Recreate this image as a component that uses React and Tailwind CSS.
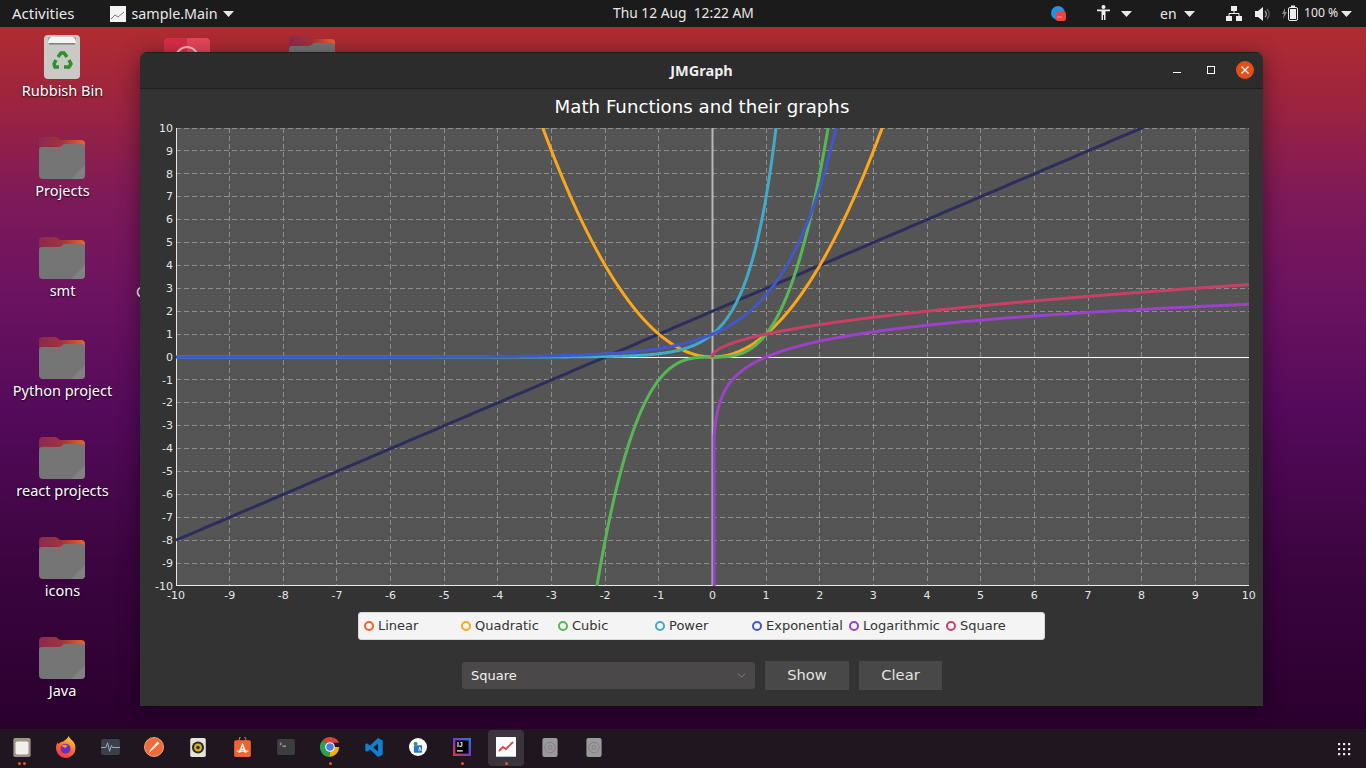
import React from 'react';
import { ChevronDown } from 'lucide-react';

const PLOT_W = 1073;
const PLOT_H = 458;
const toX = (x) => ((x + 10) / 20) * PLOT_W;
const toY = (y) => ((10 - y) / 20) * PLOT_H;

function curve(fn, from = -10, to = 10, steps = 900) {
  const pts = [];
  for (let i = 0; i <= steps; i++) {
    const x = from + ((to - from) * i) / steps;
    const y = Math.max(-30, Math.min(30, fn(x)));
    pts.push(`${toX(x).toFixed(2)},${toY(y).toFixed(2)}`);
  }
  return 'M' + pts.join('L');
}

// ln and sqrt shoot up fast near zero, so they get sampled on a cubed scale
function curveFromZero(fn, start) {
  const pts = [];
  for (let i = 0; i <= 900; i++) {
    const x = start + (10 - start) * Math.pow(i / 900, 3);
    pts.push(`${toX(x).toFixed(2)},${toY(fn(x)).toFixed(2)}`);
  }
  return 'M' + pts.join('L');
}

const series = [
  { d: curve((x) => x + 2), color: '#2d2d5c' },
  { d: curve((x) => x * x), color: '#fba71b' },
  { d: curve((x) => x * x * x), color: '#57b757' },
  { d: curve((x) => Math.pow(7, x)), color: '#41a9c9' },
  { d: curve((x) => Math.exp(x)), color: '#4258c9' },
  // the log line drops straight down from its first sample
  { d: `M${toX(0.03).toFixed(2)},${PLOT_H}L` + curveFromZero((x) => Math.log(x), 0.03).slice(1), color: '#9a42c8' },
  { d: curveFromZero((x) => Math.sqrt(x), 0), color: '#c84164' },
];

const legend = [
  ['Linear', 'border-[#f3622d]'],
  ['Quadratic', 'border-[#fba71b]'],
  ['Cubic', 'border-[#57b757]'],
  ['Power', 'border-[#41a9c9]'],
  ['Exponential', 'border-[#4258c9]'],
  ['Logarithmic', 'border-[#9a42c8]'],
  ['Square', 'border-[#c84164]'],
];

const units = Array.from({ length: 21 }, (_, i) => i - 10);

function Caret({ className = '' }) {
  return (
    <svg width="11" height="6" viewBox="0 0 11 6" className={className}>
      <path d="M0 0h11L5.5 6z" fill="#e8e8e8" />
    </svg>
  );
}

function Folder() {
  return (
    <svg width="46" height="42" viewBox="0 0 46 42" className="block">
      <defs>
        <linearGradient id="tab" x1="0" x2="1" y1="0" y2="0">
          <stop offset="0" stopColor="#8a2a52" />
          <stop offset="0.5" stopColor="#a0343a" />
          <stop offset="1" stopColor="#ec6528" />
        </linearGradient>
      </defs>
      <path d="M0 4a4 4 0 0 1 4-4h12c3 0 3 3 6 3h20a4 4 0 0 1 4 4v14H0z" fill="url(#tab)" />
      <path d="M0 13a3 3 0 0 1 3-3h17c3 0 3-3 6-3h17a3 3 0 0 1 3 3v28a4 4 0 0 1-4 4H4a4 4 0 0 1-4-4z" fill="#757575" />
      <path d="M46 28v10a4 4 0 0 1-4 4H32z" fill="#818181" />
    </svg>
  );
}

function Bin() {
  return (
    <svg width="36" height="44" viewBox="0 0 36 44" className="block">
      <rect x="0" y="0" width="36" height="44" rx="4" fill="#c9c9c5" />
      <rect x="4" y="2" width="28" height="7" rx="2" fill="#8c8c88" />
      <path d="M4 8c0-4 2-6 4-6h20c2 0 4 2 4 6z" fill="#f4f4f2" />
      <path d="M5 9h26" stroke="#777" strokeWidth="1" />
      <g fill="none" stroke="#2f8f2a" strokeWidth="3.4">
        <path d="M14 22l3-4h3l3 4" />
        <path d="M25 25l2 4-2 3h-5" />
        <path d="M15 32h-4l-1-3 2-4" />
      </g>
    </svg>
  );
}

function DesktopItem({ label, icon }) {
  return (
    <div className="flex h-[100px] w-[124px] flex-col items-center">
      <div className="flex h-[49px] items-end">{icon}</div>
      <span className="ml-px mt-px text-[14.5px] leading-5 text-white [text-shadow:0_1px_2px_rgba(0,0,0,0.9)]">
        {label}
      </span>
    </div>
  );
}

function DiskIcon() {
  return (
    <svg width="16" height="19" viewBox="0 0 16 20">
      <rect width="16" height="20" rx="2" fill="#9a9a9a" />
      <circle cx="8" cy="10" r="5.500" fill="none" stroke="#808080" strokeWidth="1" />
      <circle cx="8" cy="10" r="2" fill="none" stroke="#808080" strokeWidth="1" />
    </svg>
  );
}

const dockIcons = [
  {
    dots: 2,
    icon: (
      <svg width="18" height="19" viewBox="0 0 20 22">
        <rect width="20" height="22" rx="2" fill="#9c9484" />
        <rect x="2.5" y="4" width="15" height="15" rx="2" fill="#f1efe9" />
      </svg>
    ),
  },
  {
    icon: (
      <svg width="20" height="22" viewBox="0 0 22 24">
        <defs>
          <linearGradient id="ff" x1="0.7" x2="0.2" y1="0" y2="1">
            <stop offset="0" stopColor="#ffd23a" />
            <stop offset="0.5" stopColor="#ff6b2c" />
            <stop offset="1" stopColor="#f0304e" />
          </linearGradient>
        </defs>
        <path d="M14 0c1 3 3 4 5 6 3 4 3 9 1 13-2 3-5 5-9 5-6 0-11-5-11-11 0-3 1-5 2-6l1 2c1-2 3-3 5-3 2-2 5-3 6-6z" fill="url(#ff)" />
        <circle cx="10.5" cy="14" r="5.5" fill="#6a2fc0" />
        <path d="M6 11c2-2 5-2 7 0l-3 2z" fill="#ff8a3a" />
      </svg>
    ),
  },
  {
    icon: (
      <svg width="19" height="16" viewBox="0 0 20 17">
        <rect width="20" height="17" rx="2" fill="#3c3f48" />
        <path d="M0 9h5l2-5 2 9 2-6 1 2h8" fill="none" stroke="#9fb4cc" strokeWidth="1" />
      </svg>
    ),
  },
  {
    icon: (
      <svg width="20" height="20" viewBox="0 0 22 22">
        <circle cx="11" cy="11" r="10.5" fill="#f26a35" stroke="#f7c7ae" strokeWidth="0.8" />
        <path d="M5 18l2-4 8-9 2 2-9 8z" fill="#fff" />
      </svg>
    ),
  },
  {
    icon: (
      <svg width="16" height="19" viewBox="0 0 18 22">
        <rect width="18" height="22" rx="2" fill="#e8e4d8" />
        <circle cx="9" cy="11" r="7" fill="#2a2a2a" />
        <circle cx="9" cy="11" r="4.5" fill="#d8b020" />
        <circle cx="9" cy="11" r="2" fill="#2a2a2a" />
      </svg>
    ),
  },
  {
    icon: (
      <svg width="19" height="20" viewBox="0 0 20 24">
        <path d="M6 5V3a4 4 0 0 1 8 0v2" fill="none" stroke="#c8a890" strokeWidth="1" />
        <rect y="4" width="20" height="20" rx="2" fill="#f0652f" />
        <path d="M10 7l5 12h-2.400l-1-3H8.400l-1 3H5zM9 14h2l-1-3z" fill="#fff" fillRule="evenodd" />
        <path d="M3 17h14" stroke="#fff" strokeWidth="1.200" />
      </svg>
    ),
  },
  {
    icon: (
      <svg width="18" height="16" viewBox="0 0 20 18">
        <rect width="20" height="18" rx="2" fill="#3d3d3d" />
        <path d="M3 4l2 1.500-2 1.500" fill="none" stroke="#ddd" strokeWidth="0.8" />
        <path d="M6 8h4" stroke="#ddd" strokeWidth="1" />
      </svg>
    ),
  },
  {
    dots: 1,
    icon: (
      <svg width="20" height="20" viewBox="0 0 24 24">
        <path d="M12 12L3.600 3.500A12 12 0 0 1 23 7H12z" fill="#dc4437" />
        <path d="M12 12H23A12 12 0 0 1 11 24z" fill="#f4b400" />
        <path d="M12 12L11 24A12 12 0 0 1 3.600 3.500z" fill="#2f9e4f" />
        <circle cx="12" cy="12" r="5.800" fill="#fff" />
        <circle cx="12" cy="12" r="4.500" fill="#4a80e8" />
      </svg>
    ),
  },
  {
    icon: (
      <svg width="18" height="19" viewBox="0 0 22 24">
        <path d="M16 0l6 3v18l-6 3-10-9.500-4 3L0 16v-8l2-1.500 4 3zM16 7l-6 5 6 5z" fill="#0f7fd0" fillRule="evenodd" />
      </svg>
    ),
  },
  {
    icon: (
      <svg width="18" height="18" viewBox="0 0 22 22">
        <circle cx="11" cy="11" r="11" fill="#fff" />
        <rect x="6" y="9" width="10" height="9" rx="1" fill="#2a78c8" />
        <circle cx="8" cy="7" r="2.500" fill="#3a9a5c" />
        <path d="M12 16l1-5 2 5" fill="none" stroke="#fff" strokeWidth="1" />
      </svg>
    ),
  },
  {
    dots: 1,
    icon: (
      <svg width="18" height="18" viewBox="0 0 22 22">
        <defs>
          <linearGradient id="ij" x1="0" x2="1" y1="1" y2="0">
            <stop offset="0" stopColor="#f0323c" />
            <stop offset="0.5" stopColor="#7b35c8" />
            <stop offset="1" stopColor="#1f7fe0" />
          </linearGradient>
        </defs>
        <rect width="22" height="22" fill="url(#ij)" />
        <rect x="3" y="3" width="16" height="16" fill="#000" />
        <text x="5" y="11.500" fontSize="8" fontWeight="700" fill="#fff" fontFamily="'Liberation Sans', sans-serif">IJ</text>
        <rect x="5" y="15" width="7" height="1.500" fill="#fff" />
      </svg>
    ),
  },
  {
    dots: 1,
    active: true,
    icon: (
      <svg width="20" height="20" viewBox="0 0 20 20">
        <rect width="20" height="20" fill="#fdfdfd" />
        <path d="M0 19.500h20" stroke="#b8c4d0" strokeWidth="1" />
        <path d="M3 14l4-4 3 2 7-7" fill="none" stroke="#d8454a" strokeWidth="1.800" />
      </svg>
    ),
  },
  { icon: <DiskIcon /> },
  { icon: <DiskIcon /> },
];

function Chart() {
  return (
    <div className="relative h-[458px] w-[1073px] shrink-0 bg-[#555555]">
      <svg width={PLOT_W} height={PLOT_H} viewBox={`0 0 ${PLOT_W} ${PLOT_H}`} className="block">
        {units.map((u) => (
          <g key={u} stroke="#8e8e8e" strokeWidth="1" strokeDasharray="5 3" shapeRendering="crispEdges">
            <line x1={toX(u)} x2={toX(u)} y1="0" y2={PLOT_H} />
            <line x1="0" x2={PLOT_W} y1={toY(u)} y2={toY(u)} />
          </g>
        ))}
        <line x1={toX(0)} x2={toX(0)} y1="0" y2={PLOT_H} stroke="#b8b8b8" strokeWidth="2" />
        <line x1="0" x2={PLOT_W} y1={toY(0)} y2={toY(0)} stroke="#ffffff" strokeWidth="1" shapeRendering="crispEdges" />
        <line x1="0.5" x2="0.5" y1="0" y2={PLOT_H} stroke="#e8e8e8" strokeWidth="1" />
        <line x1="0" x2={PLOT_W} y1={PLOT_H - 0.5} y2={PLOT_H - 0.5} stroke="#e8e8e8" strokeWidth="1" />
        {series.map((s) => (
          <path key={s.color} d={s.d} fill="none" stroke={s.color} strokeWidth="3" strokeLinejoin="round" />
        ))}
      </svg>
    </div>
  );
}

function JMGraphWindow() {
  return (
    <div className="absolute left-[140px] top-[25px] flex h-[654px] w-[1123px] flex-col overflow-hidden rounded-t-[8px] bg-[#333333] shadow-[0_4px_22px_rgba(0,0,0,0.45)]">
      <div className="relative flex h-[37px] shrink-0 items-center justify-center border-y border-y-[#1f1f1f] bg-[#2c2c2c]">
        <span className="text-[14.5px] font-bold text-[#eeeeee]">JMGraph</span>
        <div className="absolute left-[1033px] top-[19px] h-px w-[8px] bg-white" />
        <div className="absolute left-[1067px] top-[13px] h-[8px] w-[8px] border border-white" />
        <div className="absolute left-[1096px] top-[8px] flex h-[18px] w-[18px] items-center justify-center rounded-full bg-[#e2501a]">
          <svg width="8" height="8" viewBox="0 0 8 8">
            <path d="M0.500 0.500l7 7M7.500 0.500l-7 7" stroke="#fff" strokeWidth="1.200" />
          </svg>
        </div>
      </div>

      <div className="flex flex-1 flex-col font-['DejaVu_Sans',sans-serif]">
        <div className="flex h-[39px] items-center justify-center pb-[4px] pl-px text-[18.2px] text-white">
          Math Functions and their graphs
        </div>

        <div className="flex h-[458px]">
          <div className="mt-px flex h-[458px] w-[33px] shrink-0 flex-col justify-between text-[11px] text-[#e6e6e6]">
            {[...units].reverse().map((u) => (
              <div key={u} className="flex h-0 items-center justify-end">{u}</div>
            ))}
          </div>
          <div className="w-[3px]" />
          <Chart />
        </div>

        <div className="ml-[36px] flex h-[18px] w-[1073px] justify-between text-[11px] text-[#e6e6e6]">
          {units.map((u) => (
            <div key={u} className="flex h-[18px] w-0 items-center justify-center pt-[2px]">{u}</div>
          ))}
        </div>

        <div className="mt-[8px] flex h-[28px] w-[687px] items-center self-center rounded-[3px] border border-[#d8d8d8] bg-[#f4f4f4] pl-[5px] text-[13px] text-[#333333]">
          {legend.map(([name, border]) => (
            <div key={name} className="flex w-[97px] shrink-0 items-center gap-[4px]">
              <span className={`h-[10px] w-[10px] shrink-0 rounded-full border-[2.5px] ${border}`} />
              <span>{name}</span>
            </div>
          ))}
        </div>

        <div className="mt-[21px] flex items-center justify-center gap-[10px] pl-px">
          <div className="flex h-[27px] w-[293px] items-center justify-between rounded-[3px] bg-[#4a4849] pl-[9px] pr-[7px] text-[13px] text-[#f0f0f0]">
            <span>Square</span>
            <ChevronDown size={13} strokeWidth={1} color="#b0b0b0" />
          </div>
          <button className="h-[29px] w-[84px] bg-[#484848] text-[14.7px] text-[#e4e4e4]">Show</button>
          <button className="h-[29px] w-[83px] bg-[#484848] text-[14.7px] text-[#e4e4e4]">Clear</button>
        </div>
      </div>
    </div>
  );
}

export default function App() {
  return (
    <div className="flex h-[768px] w-[1366px] flex-col overflow-hidden font-['Noto_Sans',sans-serif]">
      <header className="relative flex h-[27px] shrink-0 items-center bg-[#1b1b1b] text-[14px] text-[#e8e8e8]">
        <span className="ml-[12px] text-[15px]">Activities</span>
        <div className="ml-[35px] flex items-center">
          <svg width="16" height="16" viewBox="0 0 16 16">
            <rect width="16" height="16" fill="#f4f4f4" />
            <path d="M1 13l4-4 3 2 6-5" fill="none" stroke="#777" strokeWidth="1" />
          </svg>
          <span className="ml-[6px] text-[14.3px]">sample.Main</span>
          <Caret className="ml-[5px]" />
        </div>
        <span className="absolute left-[613px] text-[13.8px]">Thu 12 Aug&nbsp; 12:22 AM</span>

        <div className="absolute left-[1051px] top-[6px] h-[15px] w-[15px]">
          <svg width="15" height="15" viewBox="0 0 15 15">
            <circle cx="7" cy="7" r="7" fill="#2590dc" />
            <rect x="5" y="5.500" width="10" height="9.500" rx="2" fill="#f2403c" />
            <path d="M6 11h5" stroke="#ffd0d0" strokeWidth="0.600" />
          </svg>
        </div>
        <svg width="13" height="16" viewBox="0 0 13 16" className="absolute left-[1097px] top-[5px]">
          <circle cx="6.500" cy="2" r="2" fill="#eee" />
          <path d="M0 4.500h13v1.800H8.500V15H7V10H6v5H4.500V6.300H0z" fill="#eee" />
        </svg>
        <Caret className="absolute left-[1121px] top-[11px]" />
        <span className="absolute left-[1160px]">en</span>
        <Caret className="absolute left-[1184px] top-[11px]" />
        <svg width="16" height="15" viewBox="0 0 16 15" className="absolute left-[1226px] top-[6px]">
          <path d="M5 0h6v5H5zM0 10h6v5H0zM10 10h6v5h-6z" fill="#eee" />
          <path d="M8 5v3M3 10V7.500h10V10" fill="none" stroke="#eee" strokeWidth="1" />
        </svg>
        <svg width="15" height="14" viewBox="0 0 15 14" className="absolute left-[1255px] top-[7px]">
          <path d="M0 4h3l5-4v14l-5-4H0z" fill="#eee" />
          <path d="M10 4a4 4 0 0 1 0 6" fill="none" stroke="#aaa" strokeWidth="1.200" />
          <path d="M12 2a7 7 0 0 1 0 10" fill="none" stroke="#666" strokeWidth="1.200" />
        </svg>
        <svg width="16" height="16" viewBox="0 0 16 16" className="absolute left-[1282px] top-[5px]">
          <path d="M3 3L0 9h2l-1 5 4-7H3z" fill="#888" />
          <rect x="6.500" y="2.500" width="9" height="13" rx="1.500" fill="none" stroke="#eee" />
          <rect x="9" y="0.500" width="4" height="2" fill="#eee" />
          <rect x="8" y="4" width="6" height="10" fill="#eee" />
        </svg>
        <span className="absolute left-[1304px] text-[12.2px]">100 %</span>
        <Caret className="absolute left-[1341px] top-[11px]" />
      </header>

      <main className="relative flex-1 overflow-hidden bg-[linear-gradient(180deg,#b02c30_0%,#9c2440_11%,#7e1a58_24%,#6c1360_38%,#540a5a_55%,#3c0540_76%,#2a002e_100%)]">
        <div className="flex flex-col pt-[3px]">
          <DesktopItem label="Rubbish Bin" icon={<Bin />} />
          <DesktopItem label="Projects" icon={<Folder />} />
          <DesktopItem label="smt" icon={<Folder />} />
          <DesktopItem label="Python project" icon={<Folder />} />
          <DesktopItem label="react projects" icon={<Folder />} />
          <DesktopItem label="icons" icon={<Folder />} />
          <DesktopItem label="Java" icon={<Folder />} />
        </div>

        {/* icons that sit mostly behind the window */}
        <div className="absolute left-[164px] top-[11px] flex h-[46px] w-[46px] justify-center rounded-[4px] bg-[linear-gradient(90deg,#dc2c48_50%,#e6465a_50%)] pt-[8px]">
          <div className="h-[24px] w-[24px] rounded-full border-2 border-[#f0c0c8]" />
        </div>
        <div className="absolute left-[289px] top-[9px]"><Folder /></div>
        <span className="absolute left-[136px] top-[254px] text-[14.5px] text-white">C</span>

        <JMGraphWindow />
      </main>

      <footer className="relative flex h-[39px] shrink-0 items-start bg-[#201620] pt-px">
        {dockIcons.map((item, i) => (
          <div key={i} className="relative flex h-[36px] w-[44px] shrink-0 items-center justify-center pb-[2px]">
            {item.active && <div className="absolute inset-x-[4px] inset-y-0 rounded-[4px] bg-[#3c343c]" />}
            <div className="relative flex">{item.icon}</div>
            {item.dots > 0 && (
              <div className="absolute bottom-px flex gap-[2px]">
                {Array.from({ length: item.dots }, (_, d) => (
                  <span key={d} className="h-[3px] w-[3px] rounded-full bg-[#e95420]" />
                ))}
              </div>
            )}
          </div>
        ))}
        <svg width="14" height="14" viewBox="0 0 14 14" className="absolute left-[1337px] top-[13px]">
          {[1, 6, 11].map((y) => [1, 6, 11].map((x) => (
            <rect key={`${x}-${y}`} x={x} y={y} width="2.200" height="2.200" fill="#e8e8e8" />
          )))}
        </svg>
      </footer>
    </div>
  );
}
